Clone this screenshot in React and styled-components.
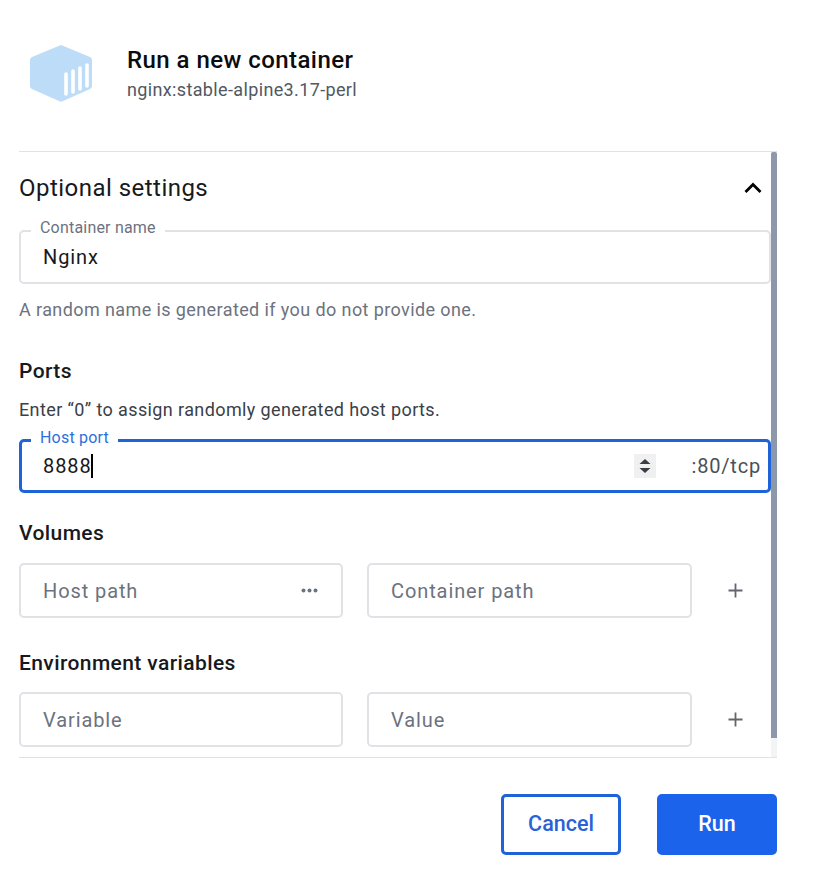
import React from 'react';
import styled, { createGlobalStyle } from 'styled-components';

const GlobalStyle = createGlobalStyle`
    html, body {
        margin: 0;
        padding: 0;
        background: #fff;
        font-family: Roboto, "Liberation Sans", sans-serif;
    }
`;

const Dialog = styled.div`
    width: 816px;
    height: 882px;
    box-sizing: border-box;
    padding: 45px 39px 0 19px;
    display: flex;
    flex-direction: column;
`;

const Header = styled.header`
    display: flex;
    align-items: flex-start;
    height: 106px;
    padding-left: 10px;
`;

const HeaderText = styled.div`
    margin-left: 34px;
    padding-top: 2px;
`;

const Title = styled.h1`
    margin: 0;
    font-size: 24px;
    line-height: 26px;
    font-weight: 500;
    letter-spacing: 0.45px;
    color: #0b0c0e;
`;

const Subtitle = styled.p`
    margin: 4px 0 0;
    font-size: 18px;
    line-height: 26px;
    letter-spacing: 0.36px;
    color: #505862;
`;

const ScrollPanel = styled.div`
    display: flex;
    height: 607px;
    border-top: 1px solid #e1e2e6;
    border-bottom: 1px solid #e1e2e6;
    box-sizing: border-box;
`;

const Content = styled.div`
    flex: 1;
    min-width: 0;
`;

const Track = styled.div`
    width: 6px;
    background: #f3f4f5;
`;

const Thumb = styled.div`
    height: 586px;
    background: #8d99ab;
    border-radius: 2px 2px 0 0;
`;

const SectionHeader = styled.div`
    display: flex;
    align-items: center;
    justify-content: space-between;
    height: 72px;
    margin-bottom: 6px;
    padding-right: 9px;
`;

const SectionTitle = styled.h2`
    margin: 0;
    font-size: 24px;
    font-weight: 400;
    letter-spacing: 0.47px;
    color: #17191c;
`;

const Field = styled.div`
    position: relative;
    box-sizing: border-box;
    height: ${(p) => p.$height || 54}px;
    border: ${(p) => (p.$active ? '3px solid #1f63d8' : '2px solid #e1e2e6')};
    border-radius: 5px;
    display: flex;
    align-items: center;
    padding-left: ${(p) => (p.$active ? 21 : 22)}px;
    padding-right: ${(p) => (p.$active ? 7 : 16)}px;
    background: #fff;
`;

const FieldLabel = styled.span`
    position: absolute;
    left: ${(p) => (p.$active ? 9 : 10)}px;
    top: -14px;
    padding: 0 9px;
    background: #fff;
    font-size: 16px;
    line-height: 20px;
    letter-spacing: 0.2px;
    color: ${(p) => (p.$active ? '#2f6fd9' : '#6c7280')};
`;

const Value = styled.span`
    flex: 1;
    font-size: 20px;
    letter-spacing: 0.9px;
    color: ${(p) => (p.$placeholder ? '#6c7280' : '#17191c')};
`;

const Caret = styled.span`
    display: inline-block;
    width: 2px;
    height: 24px;
    margin-left: -1px;
    background: #000;
    vertical-align: -5px;
`;

const Helper = styled.p`
    margin: 15px 0 0;
    font-size: 18px;
    line-height: 22px;
    letter-spacing: 0.4px;
    color: #6c7280;
`;

const SubHeading = styled.h3`
    margin: ${(p) => p.$top}px 0 0;
    font-size: 21px;
    line-height: 24px;
    font-weight: 500;
    letter-spacing: 0.4px;
    color: #17191c;
`;

const Hint = styled.p`
    margin: 17px 0 19px;
    font-size: 18px;
    line-height: 20px;
    letter-spacing: 0.39px;
    color: #3a4048;
`;

const Stepper = styled.span`
    width: 22px;
    height: 24px;
    background: #f0f0f0;
    display: flex;
    align-items: center;
    justify-content: center;
`;

const Suffix = styled.span`
    margin-left: 36px;
    font-size: 20px;
    letter-spacing: 0.8px;
    color: #4a5058;
`;

const PairRow = styled.div`
    display: grid;
    grid-template-columns: 324px 325px 79px;
    column-gap: 24px;
    margin-top: ${(p) => p.$top}px;
    align-items: center;
`;

const PlusButton = styled.span`
    display: flex;
    justify-content: center;
    margin-left: -13px;
    width: 64px;
`;

const Dots = styled.svg`
    flex: none;
    margin-right: 7px;
`;

const Footer = styled.footer`
    display: flex;
    justify-content: flex-end;
    gap: 36px;
    padding-top: 36px;
`;

const Button = styled.button`
    box-sizing: border-box;
    width: 120px;
    height: 61px;
    padding: 0 0 2px;
    border-radius: 5px;
    border: 3px solid #1f63d8;
    background: ${(p) => (p.$primary ? '#1c63ec' : '#fff')};
    border-color: ${(p) => (p.$primary ? '#1c63ec' : '#1f63d8')};
    color: ${(p) => (p.$primary ? '#fff' : '#2a62d6')};
    font-family: Roboto, "Liberation Sans", sans-serif;
    font-size: 21.5px;
    font-weight: 500;
`;

const ContainerIcon = () => (
    <svg width="64" height="57" viewBox="0 0 64 57">
        <path
            d="M32 0 L61 12 Q63 13 63 15 L63 41 Q63 43 61 44 L34 56 Q32 57 30 56 L3 44 Q1 43 1 41 L1 15 Q1 13 3 12 Z"
            fill="#bcdcf7"
        />
        <g stroke="#fff" strokeWidth="3.6" strokeLinecap="round">
            <line x1="37" y1="29" x2="37" y2="49" />
            <line x1="44" y1="26" x2="44" y2="47" />
            <line x1="51" y1="23" x2="51" y2="44" />
            <line x1="58" y1="20" x2="58" y2="41" />
        </g>
    </svg>
);

const ChevronUp = () => (
    <svg width="18" height="12" viewBox="0 0 18 12">
        <path d="M1.5 10 L9 2.5 L16.5 10" fill="none" stroke="#000" strokeWidth="2.8" />
    </svg>
);

const Plus = () => (
    <svg width="15" height="15" viewBox="0 0 15 15">
        <path d="M7.5 0.5 V14.5 M0.5 7.5 H14.5" stroke="#62666f" strokeWidth="1.8" />
    </svg>
);

const App = () => (
    <>
        <GlobalStyle />
        <Dialog>
            <Header>
                <ContainerIcon />
                <HeaderText>
                    <Title>Run a new container</Title>
                    <Subtitle>nginx:stable-alpine3.17-perl</Subtitle>
                </HeaderText>
            </Header>
            <ScrollPanel>
                <Content>
                    <SectionHeader>
                        <SectionTitle>Optional settings</SectionTitle>
                        <ChevronUp />
                    </SectionHeader>
                    <Field>
                        <FieldLabel>Container name</FieldLabel>
                        <Value>Nginx</Value>
                    </Field>
                    <Helper>A random name is generated if you do not provide one.</Helper>
                    <SubHeading $top={38}>Ports</SubHeading>
                    <Hint>Enter “0” to assign randomly generated host ports.</Hint>
                    <Field $active>
                        <FieldLabel $active>Host port</FieldLabel>
                        <Value>
                            8888
                            <Caret />
                        </Value>
                        <Stepper>
                            <svg width="12" height="16" viewBox="0 0 12 16">
                                <path d="M6 1 L11.5 6 H0.5 Z M0.5 10 H11.5 L6 15 Z" fill="#3a3f46" />
                            </svg>
                        </Stepper>
                        <Suffix>:80/tcp</Suffix>
                    </Field>
                    <SubHeading $top={28}>Volumes</SubHeading>
                    <PairRow $top={18}>
                        <Field $height={55}>
                            <Value $placeholder>Host path</Value>
                            <Dots width="17" height="5" viewBox="0 0 17 5">
                                <circle cx="2.5" cy="2.5" r="2" fill="#6c7280" />
                                <circle cx="8.5" cy="2.5" r="2" fill="#6c7280" />
                                <circle cx="14.5" cy="2.5" r="2" fill="#6c7280" />
                            </Dots>
                        </Field>
                        <Field $height={55}>
                            <Value $placeholder>Container path</Value>
                        </Field>
                        <PlusButton>
                            <Plus />
                        </PlusButton>
                    </PairRow>
                    <SubHeading $top={33}>Environment variables</SubHeading>
                    <PairRow $top={17}>
                        <Field $height={55}>
                            <Value $placeholder>Variable</Value>
                        </Field>
                        <Field $height={55}>
                            <Value $placeholder>Value</Value>
                        </Field>
                        <PlusButton>
                            <Plus />
                        </PlusButton>
                    </PairRow>
                </Content>
                <Track>
                    <Thumb />
                </Track>
            </ScrollPanel>
            <Footer>
                <Button>Cancel</Button>
                <Button $primary>Run</Button>
            </Footer>
        </Dialog>
    </>
);

export default App;
